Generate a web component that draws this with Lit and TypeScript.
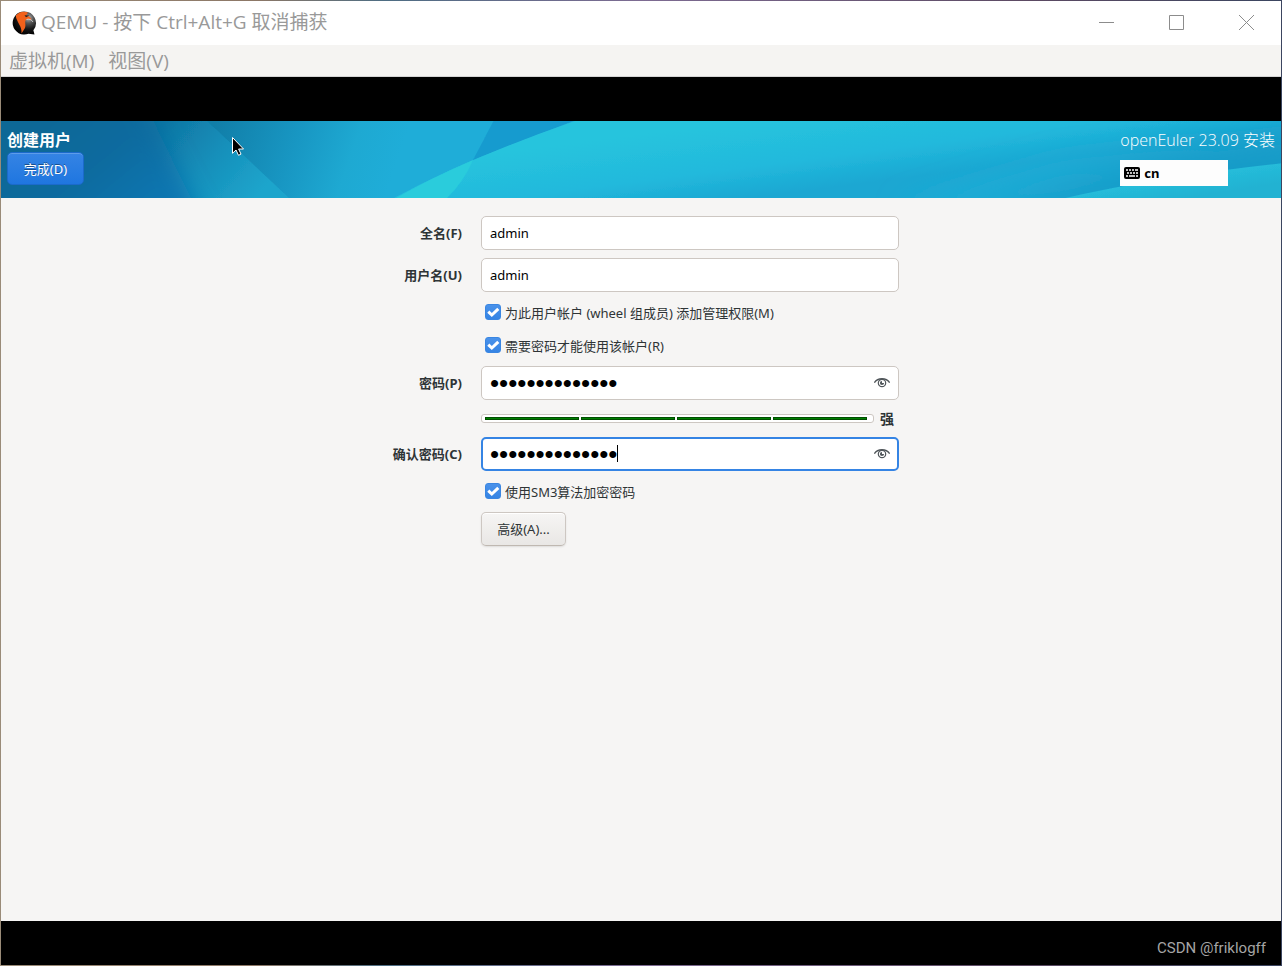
import { LitElement, html, css, svg } from "lit";
import { customElement, property, state } from "lit/decorators.js";

@customElement("banner-art")
class BannerArt extends LitElement {
  static styles = css`
    :host { position: absolute; inset: 0; display: block; overflow: hidden; }
    svg { display: block; width: 100%; height: 100%; }
  `;

  render() {
    return html`<svg viewBox="0 0 1280 77" preserveAspectRatio="none" aria-hidden="true">
      <defs>
        <linearGradient id="deep" gradientUnits="userSpaceOnUse" x1="40" y1="0" x2="130" y2="110">
          <stop offset="0" stop-color="#0a6896"></stop>
          <stop offset="0.5" stop-color="#0c6b9f"></stop>
          <stop offset="1" stop-color="#0d77b2"></stop>
        </linearGradient>
        <linearGradient id="fold" gradientUnits="userSpaceOnUse" x1="165" y1="0" x2="255" y2="77">
          <stop offset="0" stop-color="#0f76a3"></stop>
          <stop offset="0.5" stop-color="#158fba"></stop>
          <stop offset="1" stop-color="#1ea5cc"></stop>
        </linearGradient>
        <linearGradient id="mid" gradientUnits="userSpaceOnUse" x1="215" y1="0" x2="390" y2="60">
          <stop offset="0" stop-color="#117ea8"></stop>
          <stop offset="0.45" stop-color="#1897c3"></stop>
          <stop offset="0.75" stop-color="#1ea9d2"></stop>
          <stop offset="1" stop-color="#1fadd8"></stop>
        </linearGradient>
        <linearGradient id="sea" gradientUnits="userSpaceOnUse" x1="740" y1="0" x2="750" y2="77">
          <stop offset="0" stop-color="#27c4dd"></stop>
          <stop offset="0.6" stop-color="#22b9dc"></stop>
          <stop offset="1" stop-color="#1ba7d2"></stop>
        </linearGradient>
        <linearGradient id="east" gradientUnits="userSpaceOnUse" x1="1060" y1="0" x2="1085" y2="77">
          <stop offset="0" stop-color="#22badd"></stop>
          <stop offset="0.5" stop-color="#1fafd8"></stop>
          <stop offset="1" stop-color="#189bc8"></stop>
        </linearGradient>
        <linearGradient id="foot" gradientUnits="userSpaceOnUse" x1="1180" y1="45" x2="1185" y2="77">
          <stop offset="0" stop-color="#27c2de"></stop>
          <stop offset="1" stop-color="#22b2d2"></stop>
        </linearGradient>
        <filter id="soft" x="-20%" y="-40%" width="140%" height="180%"><feGaussianBlur stdDeviation="11"></feGaussianBlur></filter>
        <filter id="haze" x="-20%" y="-60%" width="140%" height="220%"><feGaussianBlur stdDeviation="14"></feGaussianBlur></filter>
        <filter id="edge" x="-5%" y="-5%" width="110%" height="110%"><feGaussianBlur stdDeviation="0.7"></feGaussianBlur></filter>
      </defs>
      ${svg`
        <rect width="1280" height="77" fill="url(#mid)"></rect>
        <path d="M0-4H202L290 79H0Z" fill="url(#fold)" filter="url(#edge)"></path>
        <path d="M-50-50H130Q160 20 216 127H-50Z" fill="url(#deep)" filter="url(#soft)"></path>
        <path d="M494-3L472 39L580-3Z" fill="#189bcf" filter="url(#edge)"></path>
        <path d="M391 78Q470 36 574 0V-4H1284V80H391Z" fill="url(#sea)" filter="url(#edge)"></path>
        <path d="M395 77Q430 57 472 39Q462 62 446 77Z" fill="#29ccdc" filter="url(#edge)"></path>
        <path d="M900 87L1060 40L1320 10V90H900Z" fill="url(#east)" filter="url(#haze)"></path>
        <path d="M1060 78Q1160 55 1284 42V80H1060Z" fill="url(#foot)" filter="url(#edge)"></path>
      `}
    </svg>`;
  }
}

@customElement("title-bar")
class TitleBar extends LitElement {
  static styles = css`
    :host { display: flex; align-items: center; height: 44px; padding-left: 10px; background: #fff; color: #999; }
    .logo { width: 26px; height: 26px; margin-right: 4px; }
    .title { flex: 1; margin: 0; padding-bottom: 2px; font-size: 19px; font-weight: 400; line-height: 24px; white-space: nowrap; }
    .buttons { display: flex; }
    button { width: 70px; height: 44px; padding: 0 0 1px; border: 0; background: none; color: #8c8c8c; }
    button svg { display: block; margin: 0 auto; }
  `;

  render() {
    return html`
      <svg class="logo" viewBox="0 0 26 26" aria-hidden="true">
        <defs>
          <radialGradient id="ball" cx="0.68" cy="0.28" r="0.75">
            <stop offset="0" stop-color="#b5b5b5"></stop>
            <stop offset="0.3" stop-color="#555"></stop>
            <stop offset="0.65" stop-color="#161616"></stop>
            <stop offset="1" stop-color="#000"></stop>
          </radialGradient>
        </defs>
        <path d="M13 1.4A11.6 11.6 0 1 0 17.5 23.8L23.5 24.6L22.4 20.2A11.6 11.6 0 0 0 13 1.4Z" fill="url(#ball)"></path>
        <path d="M5 5.2C8.500 1.500 13 1 17 2.500L15 5.500C18 6 20 7.500 20.500 10C17 8 14.500 9 14.200 11.500C14 14 15 15 14 18L10.500 23.500C11 18 8.500 15.500 7.200 12.500C6 9.500 4.500 7.500 5 5.200Z" fill="#f2611b"></path>
        <path d="M13.500 5.200L18.500 5.600L15 7.200Z" fill="#222"></path>
        <path d="M15.500 9.500C18 8.500 20.500 9.500 22 12" fill="none" stroke="#ddd" stroke-width="0.8"></path>
      </svg>
      <h1 class="title">QEMU - 按下 Ctrl+Alt+G 取消捕获</h1>
      <div class="buttons">
        <button aria-label="最小化"><svg width="15" height="15" viewBox="0 0 15 15"><path d="M0 7.500H15" stroke="currentColor"></path></svg></button>
        <button aria-label="最大化"><svg width="15" height="15" viewBox="0 0 15 15"><path d="M.5.5H14.500V14.500H.5Z" fill="none" stroke="currentColor"></path></svg></button>
        <button aria-label="关闭"><svg width="15" height="15" viewBox="0 0 15 15"><path d="M0 0L15 15M15 0L0 15" stroke="currentColor"></path></svg></button>
      </div>`;
  }
}

@customElement("check-row")
class CheckRow extends LitElement {
  @property() label = "";
  @state() private checked = true;

  static styles = css`
    :host { display: block; }
    label { display: flex; align-items: center; gap: 4px; height: 25px; padding-left: 4px; line-height: 20px; }
    input { appearance: none; flex: none; width: 16px; height: 16px; margin: 0 0 1px; border: 1px solid #cdc7c2; border-radius: 3px; background: #fff; }
    input:checked { border-color: #3a86e2; background: linear-gradient(#4a92ea, #3584e4); }
    .box { position: relative; display: flex; }
    .tick { position: absolute; left: 0; top: 0; pointer-events: none; }
  `;

  render() {
    return html`<label>
      <span class="box">
        <input type="checkbox" .checked=${this.checked}
          @change=${(e: Event) => (this.checked = (e.target as HTMLInputElement).checked)} />
        ${this.checked
          ? html`<svg class="tick" width="16" height="16" viewBox="0 0 16 16" aria-hidden="true"><path d="M3.300 7.600L6.800 11L13.300 4.800" fill="none" stroke="#fff" stroke-width="3"></path></svg>`
          : ""}
      </span>
      <span class="text">${this.label}</span>
    </label>`;
  }
}

@customElement("app-root")
class AppRoot extends LitElement {
  @state() private visible = false;

  static styles = css`
    * { box-sizing: border-box; }
    :host {
      display: flex; flex-direction: column; box-sizing: border-box; min-height: 100vh; padding: 1px;
      background: linear-gradient(90deg, #9a8b78, #8c7766 20%, #4d6d83 30%, #7d6b92 50%, #5c4a63 80%, #3b4560);
      font-family: "Noto Sans", "Noto Sans CJK SC", sans-serif; font-size: 13px; line-height: 20px; color: #2e3436;
    }
    title-bar, .menu, .product p { font-family: "Open Sans", "Noto Sans CJK SC", sans-serif; }
    .menu { display: flex; gap: 14px; height: 32px; padding: 0 8px; border-bottom: 1px solid #d5d5d5; background: #f5f4f2; }
    .menu button { padding: 0; border: 0; background: none; color: #999; font: inherit; font-size: 19px; line-height: 30px; }
    .band { height: 44px; background: #000; }
    .banner { position: relative; display: flex; justify-content: space-between; height: 77px; padding: 8px 6px 0; color: #fff; background: #1fb0d8; }
    .lead, .product { position: relative; }
    .heading { margin: 0; font-size: 16px; line-height: 23px; font-weight: 700; }
    .done { display: block; width: 77px; height: 33px; padding: 0; border: 1px solid #1b6acb; border-radius: 5px; color: #fff; font: inherit;
      background: linear-gradient(#3584e4, #1f76e0); box-shadow: inset 0 1px rgba(255,255,255,.2); text-shadow: 0 -1px rgba(0,0,0,.4); }
    .product p { margin: 0; font-size: 16px; font-weight: 300; line-height: 23px; }
    .layout { display: flex; align-items: center; gap: 4px; width: 108px; height: 26px; margin-top: 8px; padding: 0 4px; border: 0; background: #fdfdfd; color: #000; font: inherit; font-weight: 700; }
    .pointer { position: absolute; left: 230px; top: 15px; }
    .content { flex: 1; padding: 18px 0; background: #f6f5f4; }
    .form { display: grid; grid-template-columns: 79px minmax(0, 418px); column-gap: 19px; row-gap: 8px; justify-content: center; }
    .name { align-self: center; justify-self: end; font-weight: 700; white-space: nowrap; }
    .wide { grid-column: 2; }
    .field { position: relative; display: flex; }
    .entry { width: 100%; height: 34px; padding: 0 8px; border: 1px solid #cdc7c2; border-radius: 5px; outline: 0; background: #fff; color: #000; font: inherit; }
    .secret { padding-right: 36px; font-family: "Liberation Sans", sans-serif; font-size: 26px; }
    .active { padding-left: 7px; border: 2px solid #3584e4; }
    .caret { position: absolute; left: 136px; top: 8px; width: 1px; height: 17px; background: #000; }
    .eye { position: absolute; right: 9px; top: 9px; width: 16px; height: 16px; padding: 0; border: 0; background: none; color: #50565a; }
    .eye svg { display: block; }
    .strength { display: flex; align-items: center; gap: 6px; height: 21px; }
    .meter { display: flex; gap: 2px; width: 393px; height: 9px; padding: 2px 6px 2px 3px; border: 1px solid #cdc7c2; border-radius: 3px; background: #fff; }
    .part { flex: 1; border: 1px solid #004d00; background: #008000; }
    .strength strong { font-size: 14px; }
    .more { justify-self: start; width: 85px; height: 34px; padding: 0; border: 1px solid #cdc7c2; border-bottom-color: #bfb8b1; border-radius: 5px; color: inherit; font: inherit;
      background: linear-gradient(#f6f5f4, #e9e7e5); box-shadow: 0 1px 2px rgba(0,0,0,.1), inset 0 1px #fff; }
    .credit { display: flex; justify-content: flex-end; padding: 16px 15px 0; color: #a5a5a5; font-family: Roboto, sans-serif; font-size: 15px; line-height: 22px; }
  `;

  private eye() {
    return html`<button class="eye" type="button" aria-label="显示密码" @click=${() => (this.visible = !this.visible)}>
      <svg width="16" height="16" viewBox="0 0 16 16" aria-hidden="true" fill="none" stroke="currentColor">
        <path d="M.4 7.700C3.500 2.400 12.500 2.400 15.600 7.700" stroke-width="1.300"></path>
        <circle cx="8" cy="8" r="3.700" stroke-width="1.200"></circle>
        <path d="M8 8V5.900A2.100 2.100 0 1 0 10.100 8Z" fill="currentColor" stroke="none"></path>
      </svg>
    </button>`;
  }

  render() {
    const kind = this.visible ? "text" : "password";
    return html`
      <title-bar></title-bar>
      <nav class="menu"><button>虚拟机(M)</button><button>视图(V)</button></nav>
      <div class="band"></div>
      <header class="banner">
        <banner-art></banner-art>
        <div class="lead">
          <h2 class="heading">创建用户</h2>
          <button class="done">完成(D)</button>
        </div>
        <div class="product">
          <p>openEuler 23.09 安装</p>
          <button class="layout">
            <svg width="16" height="12" viewBox="0 0 16 12" aria-hidden="true">
              <rect width="16" height="12" rx="2" fill="#000"></rect>
              <path d="M2 3H4M5 3H7M8 3H10M11 3H14M3 6H5M6 6H8M9 6H11M12 6H14M2 9H4M5 9H11M12 9H14" stroke="#fff" stroke-width="1.700"></path>
            </svg>
            cn
          </button>
        </div>
        <svg class="pointer" width="14" height="21" viewBox="0 0 14 21" aria-hidden="true">
          <path d="M1.500 1.500V17.300L5 14L7.500 19.300L10 18.100L7.600 13H12.500Z" fill="#000" stroke="#fff" stroke-width="1"></path>
        </svg>
      </header>
      <main class="content">
        <form class="form" @submit=${(e: Event) => e.preventDefault()}>
          <label class="name" for="full">全名(F)</label>
          <input class="entry" id="full" value="admin" />
          <label class="name" for="user">用户名(U)</label>
          <input class="entry" id="user" value="admin" />
          <check-row class="wide" label="为此用户帐户 (wheel 组成员) 添加管理权限(M)"></check-row>
          <check-row class="wide" label="需要密码才能使用该帐户(R)"></check-row>
          <label class="name" for="pass">密码(P)</label>
          <div class="field"><input class="entry secret" id="pass" type=${kind} value="openEuler@2309" autocomplete="off" />${this.eye()}</div>
          <div class="wide strength">
            <div class="meter" role="meter" aria-label="密码强度" aria-valuemin="0" aria-valuemax="4" aria-valuenow="4">
              ${[1, 2, 3, 4].map(() => html`<span class="part"></span>`)}
            </div>
            <strong>强</strong>
          </div>
          <label class="name" for="again">确认密码(C)</label>
          <div class="field">
            <input class="entry secret active" id="again" type=${kind} value="openEuler@2309" autocomplete="off" />
            <span class="caret"></span>${this.eye()}
          </div>
          <check-row class="wide" label="使用SM3算法加密密码"></check-row>
          <button class="wide more" type="button">高级(A)...</button>
        </form>
      </main>
      <footer class="band credit">CSDN @friklogff</footer>`;
  }
}
